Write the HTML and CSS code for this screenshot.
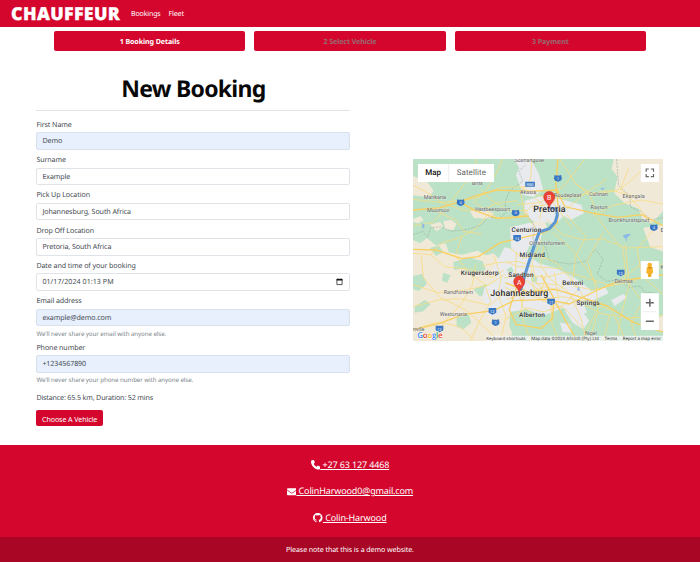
FILE: index.html
```html
<!DOCTYPE html>
<html lang="en">
<head>
<meta charset="utf-8">
<title>Chauffeur</title>
<link rel="stylesheet" href="styles.css">
</head>
<body>
<header class="navbar"><a class="brand">CHAUFFEUR</a><nav class="links"><a>Bookings</a><a>Fleet</a></nav></header>
<div class="steps"><div class="step active">1 Booking Details</div><div class="step">2 Select Vehicle</div><div class="step">3 Payment</div></div>
<main class="main">
<form class="form">
<h1><span>New Booking</span></h1>
<div class="field"><label>First Name</label><div class="input filled">Demo</div></div>
<div class="field"><label>Surname</label><div class="input">Example</div></div>
<div class="field"><label>Pick Up Location</label><div class="input">Johannesburg, South Africa</div></div>
<div class="field"><label>Drop Off Location</label><div class="input">Pretoria, South Africa</div></div>
<div class="field"><label>Date and time of your booking</label><div class="input date"><span>01/17/2024 01:13 PM</span><svg class="cal" viewBox="0 0 7 8"><path d="M.9 1.3h5.2v5.3H.9z" fill="none" stroke="#111" stroke-width=".7"/><path d="M.6 1h5.8v1.4H.6zM1.5.4h.8v1h-.8zM4.7.4h.8v1h-.8z" fill="#111"/></svg></div></div>
<div class="field help"><label>Email address</label><div class="input filled">example@demo.com</div><small>We'll never share your email with anyone else.</small></div>
<div class="field help"><label>Phone number</label><div class="input filled">+1234567890</div><small>We'll never share your phone number with anyone else.</small></div>
<p class="distance">Distance: 65.5 km, Duration: 52 mins</p>
<button type="button" class="choose">Choose A Vehicle</button>
</form>
<section class="map">
<svg viewBox="9 9 752 546" preserveAspectRatio="none">
<rect x="9" y="9" width="752" height="546" fill="#bbe2c6"/>
<!-- farmland -->
<g fill="#f1e9d8">
<path d="M9 252l22 10 20-16 26 22 30-6 10 28 40 6 46-12 26 14 22-6 22 22 10 60 30 60 6 60-20 61H9z"/>
<path d="M612 9h149v155l-34 36-30-12-10-30-42-16-32-30 10-50-18-24z"/>
<path d="M9 60l40 14 22 30-14 20-48-6zM100 196l24-4 16 12-10 18-24-2zM376 160l30-22 34 4 6 24-30 14-36-4zM372 188l34 8 8 30-24 4-20-18zM60 206l30-8 10 14-20 14zM9 190l22-10 10 12-16 10-16-4zM700 215l61-8v80l-40-14zM730 490l31-12v50l-30-8zM180 166l50-4 22 10-10 16-50-2z"/>
</g>
<g fill="#bbe2c6"><path d="M130 318l48-14 40 12 10 26-40 10-26-14-30 4zM190 400l40-16 10 20-30 18zM9 360l28-6 14 30-24 20-18-4zM14 452l30-20 18 12-22 22-26 4zM140 484l36-8 8 24-24 20-20-8zM60 276l26-8 14 20-22 12zM100 350l22 8-10 22-16-6z"/></g>
<!-- built-up areas -->
<g fill="#e8eaed">
<path d="M312 9h50l24 42 14 50-30 22-30-6-22-60 10-20zM344 134l50-14 60 10 60 16 8 26-40 20-20-12-30 28-24-10-40-4-24-20zM300 214l60-14 40 14-8 40-34 16-20 46-32-6z"/>
<path d="M284 274l60 14 42 34 50 14 60 30 44 34 8 22-30 14 14 34-30 6-44-20-60 24-50 8-58-24-34 20-30-12 10-28-20-16 8-34 38-18-14-36zM222 404l36-8 16 30-12 30-38-14zM472 440l34 10 32 44-18 26-32-20-22-34zM526 410l60-16 10 18-56 26zM450 500l30 4 6 26-28-2zM604 432l36-18 12 10-38 26z"/>
</g>
<g fill="#bbe2c6"><path d="M300 468l50-8 60 22 8 50-40 23h-60l-20-44zM420 300l20-10 16 30-20 10zM290 340l14-8 8 14-14 8zM364 360l18 4-2 16-16-4zM500 340l26 6-8 26-20-8z"/></g>
<!-- provincial borders -->
<path d="M9 236l30-10 14 18 8-28 30-4 34 14 48-6 40-12 22-24 34 2 20-16-4-30 14-36 40-28-12-30 20-20M348 170l28 44-8 36 40 24 10 40 60 10 50-8 28-36 24 30-18 44 30 22 40-6 24 24 36-4 10 18 38 4M620 9l6 80 34 30 2 34 32 14 30 24 37-6" fill="none" stroke="#96aaa0" stroke-width="1.7" stroke-dasharray="7 3"/>
<!-- secondary roads -->
<g fill="none" stroke="#f8dc82" stroke-width="2.4" stroke-linejoin="round">
<path d="M9 88l40 20 48 32 62 22 55 2 45-22 64-8M9 130l84 10 98-12 82-34 84-2M68 160l68 32 26 34 52 8M120 140l40-52 36-40 4-39M214 100l26 30 52 32 62 2M196 140l64 44 44 2 52-14M190 140l40-38 36-64 12-29M230 180l-32 38-42 22-20 62M9 210l58-10 46-46M9 292l54 4 40 36 78 8 66 24 36-22M60 298l34-36 62-20"/>
<path d="M9 386l74 24 84-8 66-14 54-34M34 300l6 64 50 60 78 38 72 66 20 27M9 452l76-20 66-4 88 20 46-38M78 555l24-56 50-52 34-56 12-66M9 520l76-22 64 14 48 43M138 300l34 46 52 38 18 52-30 54-32 65M252 300l22 64-10 50 24 66-16 75M216 330l48-10 60-4 50 16 80 6"/>
<path d="M366 9l-4 60-30 38 12 64 34 46 14 40-26 60 12 60 44 58 4 68 38 92M330 94l64 28 64 6 66-14 108-14 66-58M320 146l70-6 74-52 60-79M450 9l48 76 52 32 64-12 70 18M460 170l54-50 76-50M500 84l42 38 20 58 30 46 48 54 8 90 52 70M410 190l48 46 64 16 56-4 70 28 113-4M470 176l58 66-32 62-6 64M430 230l60 54 68 94 6 92-26 85"/>
<path d="M300 276l38 30 52-6 48 20 54 58 40 62 74 22 42 93M284 366l60-10 64 8 62-16 68 20 62 20 66-10 94-44M284 394l54 24 66-26 40 10 42-30M290 430l52-18 54 18 64-8 64 14M320 288l-4 70 26 52-10 60 30 85M364 338l6 56 26 40 70 24 48 54M286 490l66-34 48 12 60-20 44-46M400 270l-8 60 30 40 56 40 34 72 18 73M490 390l60 12 62-14 74-58 75-6M510 440l68 34 80 12 103-8M558 470l-44 85M600 476l-20 79M646 264l12 120-26 102-10 69M690 450l-26 52 18 53M580 230l-48 84 24 76M740 210l-58 70 14 80 65 56M550 180l54-30 90-18 67 12M656 38l-24 60 54 54 46 62"/>
<path d="M346 168l20-18 34-2 40-14M374 126l24 18-8 46M426 134l24 34 36 48M290 318l34 14 42 0M348 372l58 46M322 392l16 60 42 30M376 382l62 4M410 350l-20 70M434 350l12 78"/>
</g>
<!-- motorways -->
<g fill="none" stroke="#f8cf61" stroke-width="4" stroke-linejoin="round">
<path d="M9 162l78-6 66-20 48-18 60-16 94 4 86-4 24 50 88 20 72 12 70-8 66 34M9 280l70 2 76 26 50-6 66-42 80-18 42-10M444 9l-6 76 8 76-4 40-26 22-30 12-16 46-20 60-30 50-22 70 20 44 76 12 34-30 4-60-38-70M286 380l70 28 80-8 72 22 84 28 80 50 89 28M9 522l80-20 70-26 92-12 60-30 98-4 70 14 84-42 60-26 138-20M438 440l30 56 34 59M356 180l-94 8-66-24-44-24"/>
</g>
<!-- water -->
<g fill="#8ab9e8"><path d="M638 240l10-5 16-2-9 9-5 5 1 14-4-12zM506 390l4 16-8-4zM36 202l8 4-2 12-5-4zM212 158l18 3-8 6zM571 97l13-2-6 8z"/></g>
<path d="M440 158l2 20-6 20-18 20-30 10-16 44-18 56-14 46-10 30" fill="none" stroke="#5a96d4" stroke-width="9" stroke-linejoin="round"/>
<path d="M414 156l26 2M332 402l8-26" stroke="#4a8add" stroke-width="8"/>
<!-- route shields -->
<g class="shields"><g><path id="shield" d="M142 130q10 3 20 0l2 12q-2 7-12 8-10-1-12-8z"/><use href="#shield" x="292" y="-73"/><use href="#shield" x="165" y="31"/><use href="#shield" x="580" y="75"/><use href="#shield" x="105" y="360"/><path d="M310 237h23v14l-11 6-12-6zM621 341h23v14l-11 6-12-6zM412 428h23v14l-11 6-12-6zM236 456h23v14l-11 6-12-6zM77 509h23v14l-11 6-12-6zM346 77h29v15h-29z"/></g>
<text x="152" y="144">4</text><text x="444" y="71">1</text><text x="317" y="175">4</text><text x="732" y="219">4</text><text x="257" y="504">1</text><text x="321" y="252">14</text><text x="632" y="356">12</text><text x="423" y="443">17</text><text x="247" y="471">12</text><text x="88" y="524">12</text><text x="360" y="89">R80</text></g>
<g class="small-labels">
<text x="314" y="18" textLength="88">Soshanguve</text><text x="186" y="87" textLength="33">Brits</text><text x="41" y="129" textLength="67">Marikana</text><text x="51" y="167" textLength="67">Mooinooi</text><text x="330" y="113" textLength="49">Akasia</text><text x="195" y="164" textLength="105">Hartbeespoort</text><text x="432" y="123" textLength="82">Roodeplaat</text><text x="537" y="121" textLength="57">Cullinan</text><text x="638" y="127" textLength="67">Ekangala</text><text x="542" y="160" textLength="51">Rayton</text><text x="596" y="198" textLength="122">Bronkhorstspruit</text><text x="358" y="268" textLength="107">Olifantsfontein</text><text x="101" y="414" textLength="88">Randfontein</text><text x="89" y="481" textLength="82">Westonaria</text><text x="614" y="382" textLength="55">Delmas</text><text x="525" y="537" textLength="36">Nigel</text><text x="9" y="525" textLength="34">nville</text><text x="752" y="229">E</text><text x="752" y="338">K</text>
</g>
<g class="town-labels"><text x="305" y="229" textLength="89">Centurion</text><text x="329" y="303" textLength="76">Midrand</text><text x="295" y="363" textLength="76">Sandton</text><text x="152" y="357" textLength="114">Krugersdorp</text><text x="457" y="387" textLength="63">Benoni</text><text x="500" y="448" textLength="69">Springs</text><text x="327" y="483" textLength="78">Alberton</text></g>
<g class="city-labels"><text x="370" y="167" textLength="97">Pretoria</text><text x="241" y="419" textLength="174">Johannesburg</text></g>
<g id="pin"><path d="M328 411c-2-15-17-20-17-34a17 17 0 0 1 34 0c0 14-15 19-17 34z" fill="#ea4335" stroke="#c5221f"/></g><use href="#pin" x="90" y="-254"/>
<g class="pin-labels"><text x="328" y="386">A</text><text x="418" y="132">B</text></g>
<!-- attribution -->
<path d="M227 539h534v16H227z" fill="#f5f5f5" opacity=".8"/>
<g class="credits"><text x="229" y="552" textLength="118">Keyboard shortcuts</text><text x="364" y="552" textLength="203">Map data ©2024 AfriGIS (Pty) Ltd</text><text x="584" y="552" textLength="38">Terms</text><text x="639" y="552" textLength="114">Report a map error</text></g>
<text class="google" x="22" y="547" textLength="76"><tspan fill="#4285f4">G</tspan><tspan fill="#ea4335">o</tspan><tspan fill="#fbbc04">o</tspan><tspan fill="#4285f4">g</tspan><tspan fill="#34a853">l</tspan><tspan fill="#ea4335">e</tspan></text>
<!-- controls -->
<g fill="#fff"><path d="M24 24h228v54H24zM693 24h54v54h-54zM693 315h54v54h-54zM693 412h54v110h-54z"/></g>
<path d="M116 24v54M699 467h42" stroke="#e6e6e6" stroke-width="2"/>
<text class="type on" x="46" y="58" textLength="47">Map</text><text class="type" x="140" y="58" textLength="88">Satellite</text>
<path d="M709 47v-8h8M723 39h8v8M731 54v8h-8M717 62h-8v-8" fill="none" stroke="#666" stroke-width="3.5"/>
<path d="M708 440h24M720 428v24M708 496h24" stroke="#666" stroke-width="4.500"/>
<path d="M711 333h17l2 18-4 1-2 11h-9l-2-11-4-1z" fill="#f6b32b"/><circle cx="719.500" cy="327" r="7" fill="#f6b32b"/><path d="M714 334h12l-6 5zM719 351v11" fill="#d68b16" stroke="#d68b16"/>
</svg>
</section>
</main>
<footer class="footer"><div class="contacts">
<a><svg viewBox="0 0 512 512"><path d="M165 25c-8-19-29-29-48-23L29 26C12 31 0 46 0 64c0 247 201 448 448 448 18 0 33-12 38-29l24-88c5-20-5-41-24-49l-96-40c-16-7-35-2-46 12l-40 49c-71-33-128-90-161-161l49-40c14-11 19-30 12-46z"/></svg><span>&nbsp;+27 63 127 4468</span></a>
<a><svg viewBox="0 0 512 512"><path d="M48 64a48 48 0 0 0-29 86l218 164c11 8 27 8 38 0l218-164a48 48 0 0 0-29-86zM0 176v208c0 35 29 64 64 64h384c35 0 64-29 64-64V176L294 339c-23 17-53 17-76 0z"/></svg><span>&nbsp;ColinHarwood0@gmail.com</span></a>
<a><svg viewBox="0 0 16 16"><path d="M8 0C3.580 0 0 3.580 0 8c0 3.540 2.290 6.530 5.470 7.590.4.070.55-.17.55-.38 0-.19-.01-.82-.01-1.490-2.010.37-2.530-.49-2.690-.94-.09-.23-.48-.94-.82-1.130-.28-.15-.68-.52-.01-.53.63-.01 1.080.58 1.230.82.72 1.210 1.870.87 2.330.66.07-.52.28-.87.51-1.070-1.780-.2-3.640-.89-3.640-3.950 0-.87.31-1.590.82-2.150-.08-.2-.36-1.020.08-2.120 0 0 .67-.21 2.200.82a7.600 7.600 0 0 1 4 0c1.530-1.040 2.200-.82 2.200-.82.44 1.100.16 1.920.08 2.120.51.56.82 1.270.82 2.150 0 3.070-1.870 3.750-3.650 3.950.29.25.54.73.54 1.480 0 1.070-.01 1.930-.01 2.200 0 .21.15.46.55.38A8 8 0 0 0 16 8c0-4.420-3.580-8-8-8z"/></svg><span>&nbsp;Colin-Harwood</span></a>
</div><div class="note">Please note that this is a demo website.</div></footer>
</body>
</html>
```
FILE: styles.css
```css
*{box-sizing:border-box}
body{margin:0;font:7.1px/10.5px "Noto Sans",sans-serif;letter-spacing:-.09px;color:#444b50;background:#fff;text-rendering:geometricPrecision}
.navbar{height:26.5px;background:#d4062e;color:#fff;display:flex;align-items:center;padding-left:11px}
.brand{width:109px;margin-right:11px;font:900 17.8px/24px "Open Sans",sans-serif;letter-spacing:.36px;-webkit-text-stroke:.3px #fff;padding-top:1px}
.links{display:flex;gap:8px;padding-top:1px;letter-spacing:-.17px}
.steps{display:flex;gap:9px;padding:4.5px 54px 0}
.step{flex:1;height:20px;border-radius:2px;background:#d4062e;color:#976b70;font-weight:700;line-height:22px;text-align:center}
.step.active{color:#fff}
.main{display:flex;height:393.500px;padding-left:36.400px}
.form{width:314px;padding-top:22.500px}
h1{margin:0 0 7.800px;height:37.500px;font:700 23px/28.500px "Noto Sans",sans-serif;letter-spacing:-.75px;color:#080808;text-align:center;border-bottom:1px solid #e3e4e5}
label{display:block;height:10.5px;line-height:12px}
.field{height:35.250px}
.field.help{height:46.750px}
.input{height:17.5px;border:1px solid #e0e4e8;border-radius:2px;padding:0 5px;line-height:16.500px;margin-top:3px}
.filled{background:#e8f0fe;border-color:#d8e1ee}
.date{display:flex;justify-content:space-between;letter-spacing:.05px}
.cal{width:7px;height:8px;margin:3.500px 1px 0 0}
small{display:block;margin-top:2.500px;font-size:6.2px;line-height:10.5px;letter-spacing:-.09px;color:#80878d}
.distance{margin:4.500px 0 6.200px;line-height:10.5px;letter-spacing:-.15px}
.choose{display:block;width:66.5px;height:16.5px;padding:1px 0 0;background:#d4062e;color:#fff;border:0;border-radius:2px;font:7.1px/16px "Noto Sans",sans-serif;letter-spacing:-.09px}
.map{width:250.500px;height:182px;margin:107.500px 0 0 62.600px;letter-spacing:0}
.map svg{display:block;width:100%;height:100%}
.map text{font-family:Roboto,sans-serif}
.shields path{fill:#3977c4}
.shields text{fill:#fff;font-size:12px;text-anchor:middle}
.small-labels{font-size:16.5px;fill:#606060;stroke:#fff;stroke-width:2px;stroke-opacity:.5;paint-order:stroke}
.town-labels{font-size:19.5px;font-weight:500;fill:#303030;stroke:#fff;stroke-width:2px;stroke-opacity:.5;paint-order:stroke}
.city-labels{font-size:26.5px;font-weight:500;fill:#292929;stroke:#fff;stroke-width:2px;stroke-opacity:.5;paint-order:stroke}
.pin-labels{font-size:21px;fill:#fff;text-anchor:middle}
.credits{font-size:13.5px;fill:#333}
.map .google{font:600 24px "Open Sans",sans-serif;stroke:#fff;stroke-width:2px;paint-order:stroke}
.type{font-size:24px;fill:#666}
.type.on{font-weight:500;fill:#111}
.footer{background:#d4062e;color:#fff;text-align:center}
.contacts{height:92.500px;padding-top:7.500px}
.contacts a{display:flex;justify-content:center;align-items:center;height:26.400px;font-size:9px;letter-spacing:-.14px;text-decoration:none}
.contacts span{text-decoration:underline;text-underline-offset:1px}
.contacts svg{width:9.500px;height:9.500px;fill:#fff}
.note{height:25px;background:#a90524;line-height:27px}
```
